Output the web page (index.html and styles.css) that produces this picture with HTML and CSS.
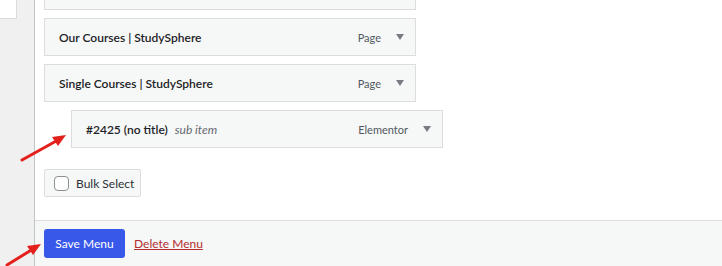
FILE: index.html
```html
<!DOCTYPE html>
<html lang="en">
<head>
    <meta charset="UTF-8">
    <title>Menus</title>
    <link rel="stylesheet" href="styles.css">
</head>
<body>
    <div class="sidebar">
        <div class="sidebar-box"></div>
    </div>

    <div class="menu-edit">
        <div class="menu-body">
            <ul class="menu-list">
                <li class="menu-item"></li>
                <li class="menu-item">
                    <span class="item-title">Our Courses | StudySphere</span>
                    <span class="item-type">Page</span>
                    <span class="item-toggle"></span>
                </li>
                <li class="menu-item">
                    <span class="item-title">Single Courses | StudySphere</span>
                    <span class="item-type">Page</span>
                    <span class="item-toggle"></span>
                </li>
                <li class="menu-item depth-1">
                    <span class="item-title">#2425 (no title) <em class="sub-item">sub item</em></span>
                    <span class="item-type">Elementor</span>
                    <span class="item-toggle"></span>
                </li>
            </ul>

            <label class="bulk-select">
                <span class="checkbox"></span>
                Bulk Select
            </label>
        </div>

        <div class="menu-footer">
            <button class="save-btn">Save Menu</button>
            <a href="#" class="delete-link">Delete Menu</a>
        </div>
    </div>

    <!-- annotation arrows -->
    <svg class="arrow arrow-item" width="50" height="32" viewBox="0 0 50 32">
        <line x1="2" y1="29" x2="38" y2="9" stroke="#e3201b" stroke-width="3" stroke-linecap="round"/>
        <polygon points="46,4 32,6 38,15" fill="#e3201b"/>
    </svg>
    <svg class="arrow arrow-save" width="40" height="30" viewBox="0 0 40 30">
        <line x1="2" y1="28" x2="28" y2="12" stroke="#e3201b" stroke-width="3" stroke-linecap="round"/>
        <polygon points="36,7 22,9 28,18" fill="#e3201b"/>
    </svg>
</body>
</html>
```

FILE: styles.css
```css
* { box-sizing: border-box; }

body {
    margin: 0;
    height: 266px;
    overflow: hidden;
    display: flex;
    background: #f0f0f1;
    font-family: "Segoe UI", Lato, sans-serif;
    font-size: 12px;
    color: #1d2327;
}

.sidebar {
    width: 34px;
    flex-shrink: 0;
}
.sidebar-box {
    width: 17px;
    height: 19px;
    background: #fff;
    border-right: 1px solid #dcdcde;
    border-bottom: 1px solid #dcdcde;
}

.menu-edit {
    flex: 1;
    display: flex;
    flex-direction: column;
    background: #fff;
    border-left: 1px solid #c3c4c7;
}

.menu-body {
    flex: 1;
    padding-left: 9px;
}

.menu-list {
    list-style: none;
    margin: -28px 0 0;
    padding: 0;
}

.menu-item {
    width: 372px;
    height: 38px;
    margin-bottom: 8px;
    display: flex;
    align-items: center;
    padding: 0 11px 0 14px;
    background: #f6f7f7;
    border: 1px solid #dcdcde;
}
.menu-item.depth-1 { margin-left: 27px; }

.item-title {
    flex: 1;
    font-weight: 600;
    white-space: nowrap;
}
.sub-item {
    font-weight: 400;
    color: #646970;
    margin-left: 4px;
}

.item-type {
    font-size: 11px;
    color: #50575e;
}

.item-toggle {
    width: 0;
    height: 0;
    margin-left: 15px;
    border-left: 4px solid transparent;
    border-right: 4px solid transparent;
    border-top: 6px solid #787c82;
}

.bulk-select {
    margin-top: 21px;
    width: 97px;
    height: 28px;
    display: flex;
    align-items: center;
    gap: 7px;
    padding-left: 9px;
    white-space: nowrap;
    border: 1px solid #dcdcde;
    border-radius: 2px;
    background: #f6f7f7;
    color: #2c3338;
}
.checkbox {
    width: 15px;
    height: 15px;
    border: 1px solid #8c8f94;
    border-radius: 4px;
    background: #fff;
}

.menu-footer {
    height: 46px;
    display: flex;
    align-items: center;
    gap: 9px;
    padding: 0 9px;
    background: #f6f7f7;
    border-top: 1px solid #dcdcde;
}

.save-btn {
    width: 81px;
    height: 29px;
    border: none;
    border-radius: 3px;
    background: #3858e9;
    color: #fff;
    font-family: inherit;
    font-size: 12px;
}

.delete-link {
    color: #b32d2e;
    text-decoration: underline;
}

.arrow { position: absolute; }
.arrow-item { left: 20px; top: 131px; }
.arrow-save { left: 5px; top: 237px; }
```
